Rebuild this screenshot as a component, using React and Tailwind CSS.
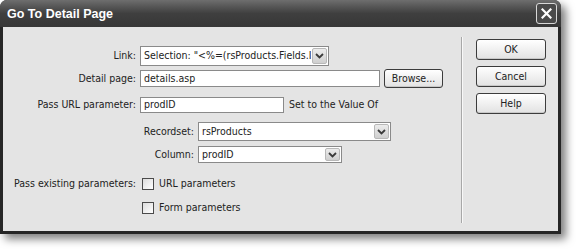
const Chevron = () => (
  <svg width="9" height="6" viewBox="0 0 9 6" className="block">
    <path d="M1 1 L4.5 4.5 L8 1" fill="none" stroke="#3a3a3a" strokeWidth="1.8" />
  </svg>
);

function Select({ w, h, value }) {
  return (
    <div
      className={`flex items-stretch bg-white border border-[#8a8a8a] ${w} ${h}`}
    >
      <div className="flex-1 min-w-0 overflow-hidden whitespace-nowrap pl-[3px] flex items-center">
        {value}
      </div>
      <div className="w-[15px] m-px flex items-center justify-center rounded-[2px] border border-[#b8b8b8] bg-linear-to-b from-[#ececec] to-[#cfcfcf]">
        <Chevron />
      </div>
    </div>
  );
}

function Input({ w, h, value }) {
  return (
    <div
      className={`flex items-center bg-white border border-[#8a8a8a] pl-[3px] whitespace-nowrap overflow-hidden ${w} ${h}`}
    >
      {value}
    </div>
  );
}

function Button({ w, h, children }) {
  return (
    <div
      className={`flex items-center justify-center rounded-[3px] border border-[#3c3c3c] bg-linear-to-b from-[#ffffff] to-[#e2e2e2] shadow-[inset_0_-1px_0_#c8c8c8] ${w} ${h}`}
    >
      {children}
    </div>
  );
}

function Checkbox() {
  return (
    <div className="w-[12px] h-[12px] border border-[#4a4a4a] bg-linear-to-br from-[#dcdcdc] to-[#ffffff]" />
  );
}

function Label({ w, children }) {
  return (
    <div className={`flex justify-end whitespace-nowrap shrink-0 ${w}`}>
      <span className="whitespace-nowrap">{children}</span>
    </div>
  );
}

export default function App() {
  return (
    <div className="w-[576px] h-[249px] bg-white overflow-hidden font-['DejaVu_Sans_Condensed','Liberation_Sans',sans-serif] text-[10.5px] text-[#222222]">
      <div className="w-[561px] h-[234px] flex flex-col bg-[#262626] rounded-t-[7px] shadow-[5px_5px_8px_rgba(0,0,0,0.5)]">
        <div className="h-[27px] flex items-center justify-between pl-[7px] pr-[4px] rounded-t-[7px] bg-linear-to-b from-[#6e6e6e] via-[#3f3f3f] to-[#373737]">
          <span className="text-white font-bold text-[12.5px] font-['Liberation_Sans',sans-serif] pt-[1px]">
            Go To Detail Page
          </span>
          <div className="w-[21px] h-[21px] rounded-[3px] border border-[#d8d8d8] bg-[#4a4a4a] flex items-center justify-center">
            <svg width="11" height="11" viewBox="0 0 11 11">
              <path d="M1.5 1.5 L9.5 9.5 M9.5 1.5 L1.5 9.5" stroke="#ffffff" strokeWidth="2.2" strokeLinecap="square" />
            </svg>
          </div>
        </div>
        <div className="flex-1 mx-[3px] mb-[3px] bg-[#e4e4e4] flex">
          <div className="w-[458px] pl-[13px] flex flex-col">
            <div className="mt-[19px] flex items-center h-[20px]">
              <Label w="w-[120px]">Link:</Label>
              <div className="ml-[4px]">
                <Select w="w-[189px]" h="h-[20px]" value={'Selection: "<%=(rsProducts.Fields.Item("prodID").Value)%>"'} />
              </div>
            </div>
            <div className="mt-[3px] flex items-center h-[19px]">
              <Label w="w-[120px]">Detail page:</Label>
              <div className="ml-[4px]">
                <Input w="w-[240px]" h="h-[17px]" value="details.asp" />
              </div>
              <div className="ml-[4px]">
                <Button w="w-[59px]" h="h-[19px]">Browse...</Button>
              </div>
            </div>
            <div className="mt-[9px] flex items-center h-[16px]">
              <Label w="w-[120px]">Pass URL parameter:</Label>
              <div className="ml-[4px]">
                <Input w="w-[144px]" h="h-[16px]" value="prodID" />
              </div>
              <span className="ml-[5px] whitespace-nowrap">Set to the Value Of</span>
            </div>
            <div className="mt-[9px] flex items-center h-[19px]">
              <Label w="w-[178px]">Recordset:</Label>
              <div className="ml-[4px]">
                <Select w="w-[193px]" h="h-[19px]" value="rsProducts" />
              </div>
            </div>
            <div className="mt-[5px] flex items-center h-[17px]">
              <Label w="w-[178px]">Column:</Label>
              <div className="ml-[4px]">
                <Select w="w-[144px]" h="h-[17px]" value="prodID" />
              </div>
            </div>
            <div className="mt-[15px] flex items-center h-[12px]">
              <Label w="w-[120px]">Pass existing parameters:</Label>
              <div className="ml-[6px]">
                <Checkbox />
              </div>
              <span className="ml-[5px] whitespace-nowrap">URL parameters</span>
            </div>
            <div className="mt-[12px] flex items-center h-[12px]">
              <span className="w-[120px] shrink-0" />
              <div className="ml-[6px]">
                <Checkbox />
              </div>
              <span className="ml-[5px] whitespace-nowrap">Form parameters</span>
            </div>
          </div>
          <div className="w-px mt-[10px] mb-[8px] bg-[#a8a8a8] shadow-[1px_0_0_#f8f8f8]" />
          <div className="flex-1 pl-[14px] pt-[12px] flex flex-col gap-[6px]">
            <Button w="w-[70px]" h="h-[21px]">OK</Button>
            <Button w="w-[70px]" h="h-[21px]">Cancel</Button>
            <Button w="w-[70px]" h="h-[21px]">Help</Button>
          </div>
        </div>
      </div>
    </div>
  );
}
